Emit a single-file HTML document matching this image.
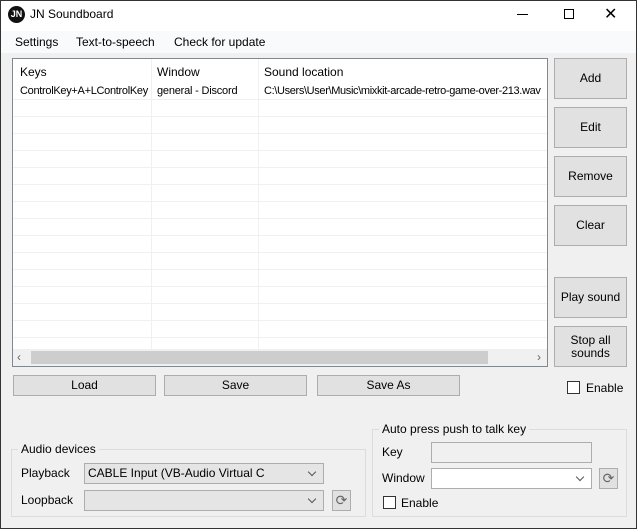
<!DOCTYPE html><html><head><style>
*{box-sizing:border-box;margin:0;padding:0}
body{width:637px;height:529px;overflow:hidden;font-family:"Liberation Sans",sans-serif;font-size:12px;color:#000;background:#f0f0f0;position:relative}
.a{position:absolute;white-space:nowrap}
.win{left:0;top:0;width:637px;height:529px;border:1px solid #333}
.btn{position:absolute;background:#e1e1e1;border:1px solid #adadad;display:flex;align-items:center;justify-content:center;text-align:center;line-height:13px}
.cb{position:absolute;width:13px;height:13px;border:1px solid #333;background:#fff}
.combo{position:absolute;border:1px solid #adadad;background:#e5e5e5;padding-left:3px;line-height:18px}
.combo:after{content:"";position:absolute;right:8px;top:5px;width:5px;height:5px;border-right:1px solid #555;border-bottom:1px solid #555;transform:rotate(45deg)}
.grp{position:absolute;border:1px solid #dcdcdc}
.grp span{position:absolute;top:-8px;left:6px;background:#f0f0f0;padding:0 3px}
.ref{position:absolute;width:19px;height:21px;border:1px solid #adadad;background:#e1e1e1;font-size:14px;text-align:center;line-height:18px;color:#666}
</style></head><body>
<div class="a" style="left:0;top:0;width:637px;height:31px;background:#fff"></div>
<div class="a" style="left:8px;top:6px;width:17px;height:17px;border-radius:50%;background:#111;color:#fff;font-size:9px;font-weight:bold;text-align:center;line-height:17px">JN</div>
<div class="a" style="left:30px;top:7px;font-size:12px">JN Soundboard</div>
<div class="a" style="left:517px;top:14px;width:11px;border-top:1px solid #000"></div>
<div class="a" style="left:564px;top:9px;width:10px;height:10px;border:1px solid #000"></div>
<div class="a" style="left:604px;top:4px;font-size:16px">✕</div>
<div class="a" style="left:1px;top:31px;width:635px;height:22px;background:#f9fafb"></div>
<div class="a" style="left:15px;top:35px">Settings</div>
<div class="a" style="left:76px;top:35px">Text-to-speech</div>
<div class="a" style="left:174px;top:35px">Check for update</div>
<div class="a" style="left:12px;top:58px;width:536px;height:309px;border:1px solid #828790;background:#fff;overflow:hidden">
<div class="a" style="left:0;top:40px;width:536px;height:250px;background:repeating-linear-gradient(to bottom,#f0f0f0 0,#f0f0f0 1px,transparent 1px,transparent 17px)"></div>
<div class="a" style="left:138px;top:0;height:290px;border-left:1px solid #f0f0f0"></div>
<div class="a" style="left:245px;top:0;height:290px;border-left:1px solid #f0f0f0"></div>
<div class="a" style="left:7px;top:6px">Keys</div><div class="a" style="left:144px;top:6px">Window</div><div class="a" style="left:251px;top:6px">Sound location</div>
<div class="a" style="left:7px;top:26px;font-size:11px;letter-spacing:-0.3px">ControlKey+A+LControlKey</div><div class="a" style="left:144px;top:26px;font-size:11px;letter-spacing:-0.2px">general - Discord</div><div class="a" style="left:251px;top:26px;font-size:11px;letter-spacing:-0.35px">C:\Users\User\Music\mixkit-arcade-retro-game-over-213.wav</div>
<div class="a" style="left:0;top:290px;width:534px;height:17px;background:#f0f0f0"></div>
<div class="a" style="left:18px;top:292px;width:457px;height:13px;background:#cdcdcd"></div>
<div class="a" style="left:4px;top:291px;color:#666">‹</div><div class="a" style="left:524px;top:291px;color:#666">›</div>
</div>
<div class="btn" style="left:554px;top:58px;width:73px;height:41px">Add</div>
<div class="btn" style="left:554px;top:107px;width:73px;height:41px">Edit</div>
<div class="btn" style="left:554px;top:156px;width:73px;height:41px">Remove</div>
<div class="btn" style="left:554px;top:205px;width:73px;height:41px">Clear</div>
<div class="btn" style="left:554px;top:277px;width:73px;height:41px">Play sound</div>
<div class="btn" style="left:554px;top:326px;width:73px;height:41px">Stop all<br>sounds</div>
<div class="cb" style="left:567px;top:381px"></div><div class="a" style="left:586px;top:381px">Enable</div>
<div class="btn" style="left:13px;top:375px;width:143px;height:21px">Load</div>
<div class="btn" style="left:164px;top:375px;width:143px;height:21px">Save</div>
<div class="btn" style="left:317px;top:375px;width:143px;height:21px">Save As</div>
<div class="grp" style="left:11px;top:449px;width:355px;height:68px"><span>Audio devices</span></div>
<div class="a" style="left:21px;top:466px">Playback</div>
<div class="combo" style="left:84px;top:463px;width:240px;height:21px">CABLE Input (VB-Audio Virtual C</div>
<div class="a" style="left:21px;top:493px">Loopback</div>
<div class="combo" style="left:84px;top:490px;width:240px;height:21px"></div>
<div class="ref" style="left:332px;top:490px">⟳</div>
<div class="grp" style="left:372px;top:429px;width:255px;height:88px"><span>Auto press push to talk key</span></div>
<div class="a" style="left:382px;top:445px">Key</div>
<div class="a" style="left:431px;top:442px;width:161px;height:21px;border:1px solid #adadad;background:#f0f0f0"></div>
<div class="a" style="left:382px;top:471px">Window</div>
<div class="combo" style="left:431px;top:468px;width:161px;height:21px;background:#fff"></div>
<div class="ref" style="left:599px;top:468px">⟳</div>
<div class="cb" style="left:383px;top:496px"></div><div class="a" style="left:401px;top:496px">Enable</div>
<div class="a win"></div>
</body></html>
